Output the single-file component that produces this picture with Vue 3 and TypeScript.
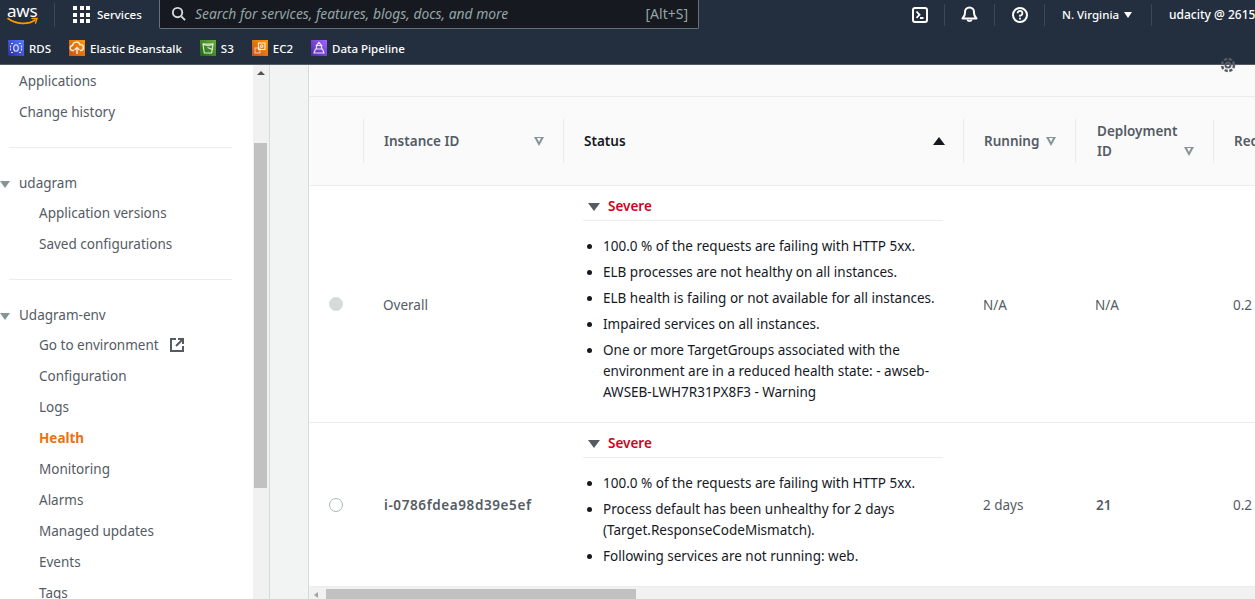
<script setup lang="ts">
interface NavItem {
  label: string
  active?: boolean
  external?: boolean
}

interface Row {
  id: string
  bold: boolean
  filled: boolean
  running: string
  deployment: string
  causes: string[]
}

const shortcuts = [
  { label: 'RDS', kind: 'rds' },
  { label: 'Elastic Beanstalk', kind: 'eb' },
  { label: 'S3', kind: 's3' },
  { label: 'EC2', kind: 'ec2' },
  { label: 'Data Pipeline', kind: 'dp' }
]

const appItems: NavItem[] = [{ label: 'Application versions' }, { label: 'Saved configurations' }]

const envItems: NavItem[] = [
  { label: 'Go to environment', external: true },
  { label: 'Configuration' },
  { label: 'Logs' },
  { label: 'Health', active: true },
  { label: 'Monitoring' },
  { label: 'Alarms' },
  { label: 'Managed updates' },
  { label: 'Events' },
  { label: 'Tags' }
]

const rows: Row[] = [
  {
    id: 'Overall',
    bold: false,
    filled: true,
    running: 'N/A',
    deployment: 'N/A',
    causes: [
      '100.0 % of the requests are failing with HTTP 5xx.',
      'ELB processes are not healthy on all instances.',
      'ELB health is failing or not available for all instances.',
      'Impaired services on all instances.',
      'One or more TargetGroups associated with the environment are in a reduced health state: - awseb-AWSEB-LWH7R31PX8F3 - Warning'
    ]
  },
  {
    id: 'i-0786fdea98d39e5ef',
    bold: true,
    filled: false,
    running: '2 days',
    deployment: '21',
    causes: [
      '100.0 % of the requests are failing with HTTP 5xx.',
      'Process default has been unhealthy for 2 days (Target.ResponseCodeMismatch).',
      'Following services are not running: web.'
    ]
  }
]
</script>

<template>
  <div class="page">
    <header class="top">
      <div class="top-main">
        <div class="logo">
          <span class="logo-text">aws</span>
          <svg class="smile" viewBox="0 0 32 9" fill="none">
            <path d="M1 1.5C9 7.5 21 8 28 3" stroke="#ff9900" stroke-width="1.6" stroke-linecap="round" />
            <path d="M25 1.5h5l-1.5 4.5" stroke="#ff9900" stroke-width="1.4" stroke-linecap="round" />
          </svg>
        </div>
        <div class="services">
          <span class="grid-icon"><i v-for="n in 9" :key="n"></i></span>
          <span>Services</span>
        </div>
        <div class="search">
          <svg class="search-icon" viewBox="0 0 16 16" fill="none">
            <circle cx="7" cy="7" r="5" stroke="#d5dbdb" stroke-width="2" />
            <path d="M11 11l4 4" stroke="#d5dbdb" stroke-width="2" />
          </svg>
          <span class="search-text">Search for services, features, blogs, docs, and more</span>
          <span class="search-key">[Alt+S]</span>
        </div>
        <div class="top-actions">
          <div class="action">
            <svg width="16" height="16" viewBox="0 0 16 16" fill="none">
              <rect x="1" y="1" width="14" height="14" rx="2" stroke="#fff" stroke-width="2" />
              <path d="M4.5 4.5L7.5 7.8l-3 3M8 11h3.5" stroke="#fff" stroke-width="1.8" />
            </svg>
          </div>
          <div class="action">
            <svg width="17" height="17" viewBox="0 0 17 17" fill="none">
              <path d="M1.5 12.5h14c-1.5-1.5-2.5-3-2.5-5.5V6a4.500 4.500 0 0 0-9 0v1c0 2.500-1 4-2.500 5.500z" stroke="#fff" stroke-width="2" stroke-linejoin="round" />
              <path d="M6.3 13.5a2.300 2.300 0 0 0 4.400 0" stroke="#fff" stroke-width="1.8" />
            </svg>
          </div>
          <div class="action">
            <svg width="16" height="16" viewBox="0 0 16 16" fill="none">
              <circle cx="8" cy="8" r="7" stroke="#fff" stroke-width="2" />
              <path d="M5.6 6.3A2.400 2.400 0 1 1 8 8.600v1.200" stroke="#fff" stroke-width="1.8" />
              <path d="M8 10.7v1.8" stroke="#fff" stroke-width="1.8" />
            </svg>
          </div>
          <div class="region">N. Virginia <span class="caret"></span></div>
          <div class="account">udacity @ 2615</div>
        </div>
      </div>
      <nav class="shortcuts">
        <div v-for="s in shortcuts" :key="s.label" class="shortcut">
          <span class="svc" :class="s.kind">
            <svg viewBox="0 0 16 16" fill="none" stroke="#fff" stroke-width="1.1" stroke-opacity="0.85">
              <template v-if="s.kind === 'rds'">
                <ellipse cx="8" cy="8" rx="2.3" ry="3.3" />
                <path d="M2.5 5.5v5M13.5 5.5v5M5 3.5H2.5M11 3.5h2.500M5 12.500H2.500M11 12.500h2.500" stroke-dasharray="2 1" />
              </template>
              <template v-else-if="s.kind === 'eb'">
                <path d="M5 10.500H4a2.500 2.500 0 0 1-.4-5 3.800 3.800 0 0 1 7.400-.8 2.900 2.900 0 0 1 1 5.800h-1" stroke-width="1.4" />
                <path d="M8 14V7.500M5.500 10L8 7.500l2.500 2.500" stroke-width="1.4" />
              </template>
              <template v-else-if="s.kind === 's3'">
                <path d="M3 4h10l-1.3 9H4.300z" />
                <path d="M3 4c2 1.800 8 1.800 10 0M7.500 7.500l5 2" />
              </template>
              <template v-else-if="s.kind === 'ec2'">
                <rect x="6.5" y="3" width="6.5" height="6.5" />
                <rect x="3" y="8" width="5" height="5" stroke-opacity="0.6" />
                <circle cx="9.7" cy="6.2" r="1.2" />
              </template>
              <template v-else>
                <path d="M8 2.500l2.500 3h-5zM5.500 6v3M10.500 6v3M3 13l1.500-4h7L13 13z" stroke-width="1.2" />
              </template>
            </svg>
          </span>
          <span>{{ s.label }}</span>
        </div>
      </nav>
    </header>

    <div class="body">
      <aside class="side">
        <div class="side-scroll">
          <a class="nav-top">Applications</a>
          <a class="nav-top">Change history</a>
          <hr class="divider" />
          <div class="group"><span class="tri"></span>udagram</div>
          <a v-for="item in appItems" :key="item.label" class="nav-sub">{{ item.label }}</a>
          <hr class="divider" />
          <div class="group"><span class="tri"></span>Udagram-env</div>
          <a v-for="item in envItems" :key="item.label" class="nav-sub" :class="{ active: item.active }">
            {{ item.label }}
            <svg v-if="item.external" class="ext" viewBox="0 0 14 14" fill="none">
              <path d="M6 1H1v12h12V8" stroke="#545b64" stroke-width="2" />
              <path d="M8 1h5v5M13 1L6 8" stroke="#545b64" stroke-width="2" />
            </svg>
          </a>
        </div>
        <div class="side-bar">
          <span class="arrow-up"></span>
          <span class="thumb-v"></span>
        </div>
      </aside>

      <main class="gutter">
        <section class="panel">
          <div class="panel-top">
            <svg class="gear" viewBox="0 0 16 16" fill="none">
              <circle cx="8" cy="8" r="2.5" stroke="#545b64" stroke-width="2" />
              <circle cx="8" cy="8" r="6" stroke="#545b64" stroke-width="2.5" stroke-dasharray="3.2 1.5" />
            </svg>
          </div>
          <div class="table-wrap">
            <table class="health">
              <colgroup>
                <col class="c-radio" />
                <col class="c-id" />
                <col class="c-status" />
                <col class="c-run" />
                <col class="c-dep" />
                <col class="c-req" />
              </colgroup>
              <thead>
                <tr>
                  <th></th>
                  <th>
                    <div class="th-in">Instance ID<span class="sort"></span></div>
                  </th>
                  <th>
                    <div class="th-in sorted">Status<span class="sort-up"></span></div>
                  </th>
                  <th>
                    <div class="th-in">Running<span class="sort"></span></div>
                  </th>
                  <th>
                    <div class="th-in dep"><span>Deployment<br />ID</span><span class="sort low"></span></div>
                  </th>
                  <th>
                    <div class="th-in">Requests</div>
                  </th>
                </tr>
              </thead>
              <tbody>
                <tr v-for="row in rows" :key="row.id">
                  <td class="radio-cell">
                    <span class="radio" :class="{ filled: row.filled }"></span>
                  </td>
                  <td :class="{ strong: row.bold, 'strong-id': row.bold }">{{ row.id }}</td>
                  <td class="status-cell">
                    <div class="severe"><span class="tri dark"></span>Severe</div>
                    <ul>
                      <li v-for="cause in row.causes" :key="cause">{{ cause }}</li>
                    </ul>
                  </td>
                  <td>{{ row.running }}</td>
                  <td :class="{ strong: row.bold }">{{ row.deployment }}</td>
                  <td>0.2</td>
                </tr>
              </tbody>
            </table>
          </div>
          <div class="h-bar">
            <span class="arrow-left"></span>
            <span class="thumb-h"></span>
          </div>
        </section>
      </main>
    </div>
  </div>
</template>

<style>
html,
body {
  margin: 0;
  overflow: hidden;
}
</style>

<style scoped>
.page {
  width: 1255px;
  height: 599px;
  display: flex;
  flex-direction: column;
  overflow: hidden;
  font-family: 'Noto Sans', 'Open Sans', sans-serif;
  font-size: 13.5px;
  color: #16191f;
  background: #fff;
}

.top {
  height: 65px;
  flex: none;
  background: #232f3e;
  border-bottom: 1px solid #545b64;
  box-sizing: border-box;
  color: #fff;
}

.top-main {
  height: 29px;
  display: flex;
  align-items: center;
  background: #232f3e;
}

.logo {
  width: 55px;
  flex: none;
  box-sizing: border-box;
  padding-left: 7px;
  height: 24px;
  border-right: 1px solid #414750;
  display: flex;
  flex-direction: column;
  position: relative;
}

.logo-text {
  font-size: 17px;
  line-height: 15px;
  letter-spacing: -0.2px;
  color: #fff;
}

.smile {
  width: 32px;
  height: 9px;
  margin-top: -1px;
}

.services {
  display: flex;
  align-items: center;
  gap: 7px;
  width: 104px;
  flex: none;
  box-sizing: border-box;
  padding-left: 18px;
  font-size: 11.5px;
  font-weight: 500;
}

.grid-icon {
  display: grid;
  grid-template-columns: repeat(3, 4px);
  gap: 2.5px;
}

.grid-icon i {
  width: 4px;
  height: 4px;
  background: #fff;
}

.search {
  width: 540px;
  height: 29px;
  flex: none;
  box-sizing: border-box;
  background: #16191f;
  border: 1px solid #687078;
  border-top: none;
  border-radius: 0 0 2px 2px;
  display: flex;
  align-items: center;
  padding: 0 10px 2px 11px;
}

.search-icon {
  width: 15px;
  height: 15px;
  flex: none;
}

.search-text {
  margin-left: 9px;
  font-style: italic;
  color: #95a5a6;
  font-size: 13.85px;
  flex: 1;
  white-space: nowrap;
}

.search-key {
  color: #95a5a6;
  font-size: 14px;
}

.top-actions {
  display: flex;
  align-items: center;
  margin-left: 196px;
  flex: none;
  height: 24px;
  white-space: nowrap;
  font-size: 11.5px;
  font-weight: 500;
}

.action {
  width: 50px;
  height: 22px;
  box-sizing: border-box;
  border-right: 1px solid #414750;
  display: flex;
  align-items: center;
  justify-content: center;
}

.region {
  width: 107px;
  height: 22px;
  line-height: 22px;
  box-sizing: border-box;
  padding-left: 17px;
  border-right: 1px solid #414750;
}

.caret {
  display: inline-block;
  width: 0;
  height: 0;
  margin-left: 2px;
  border-left: 4.5px solid transparent;
  border-right: 4.5px solid transparent;
  border-top: 6px solid #fff;
  vertical-align: 1px;
}

.account {
  padding-left: 17px;
  font-size: 12px;
}

.shortcuts {
  height: 35px;
  display: flex;
  align-items: center;
  padding: 3px 0 0 8px;
  box-sizing: border-box;
  gap: 18px;
  font-size: 11.5px;
  font-weight: 500;
}

.shortcut {
  display: flex;
  align-items: center;
  gap: 5px;
}

.svc {
  width: 16px;
  height: 16px;
  display: block;
}

.svc svg {
  width: 16px;
  height: 16px;
  display: block;
}

.rds {
  background: linear-gradient(45deg, #2e27ad, #527fff);
}

.eb,
.ec2 {
  background: linear-gradient(45deg, #c8511b, #ff9900);
}

.s3 {
  background: linear-gradient(45deg, #1b660f, #6cae3e);
}

.dp {
  background: linear-gradient(45deg, #4d27a8, #a166ff);
}

.body {
  flex: 1;
  display: flex;
  min-height: 0;
}

.side {
  width: 270px;
  flex: none;
  display: flex;
  border-right: 1px solid #d5dbdb;
  box-sizing: border-box;
}

.side-scroll {
  width: 253px;
  flex: none;
  background: #fff;
  box-sizing: border-box;
  padding-top: 1px;
  overflow: hidden;
  color: #545b64;
  font-size: 13.5px;
}

.nav-top,
.nav-sub {
  display: block;
  height: 31px;
  line-height: 31px;
  white-space: nowrap;
}

.group {
  display: block;
  height: 30px;
  line-height: 31px;
  white-space: nowrap;
}

.nav-top,
.group {
  padding-left: 19px;
  position: relative;
}

.nav-sub {
  padding-left: 39px;
}

.nav-sub.active {
  color: #ec7211;
  font-weight: 700;
}

.divider {
  margin: 19px 21px 20px 9px;
  border: none;
  border-top: 1px solid #eaeded;
}

.group .tri {
  position: absolute;
  left: 0;
  top: 13px;
}

.tri {
  display: inline-block;
  width: 0;
  height: 0;
  border-left: 5px solid transparent;
  border-right: 5px solid transparent;
  border-top: 7px solid #879596;
}

.tri.dark {
  border-left-width: 6px;
  border-right-width: 6px;
  border-top: 8px solid #545b64;
  margin-right: 8px;
  vertical-align: 0;
}

.ext {
  width: 14px;
  height: 14px;
  margin-left: 8px;
  vertical-align: -2px;
}

.side-bar {
  width: 16px;
  flex: none;
  background: #f1f1f1;
  position: relative;
}

.arrow-up {
  position: absolute;
  left: 4px;
  top: 6px;
  width: 0;
  height: 0;
  border-left: 4px solid transparent;
  border-right: 4px solid transparent;
  border-bottom: 4px solid #505050;
}

.thumb-v {
  position: absolute;
  left: 1px;
  top: 78px;
  width: 13px;
  height: 345px;
  background: #c1c1c1;
}

.gutter {
  flex: 1;
  min-width: 0;
  background: #f2f3f3;
  padding-left: 38px;
  display: flex;
}

.panel {
  flex: 1;
  min-width: 0;
  background: #fff;
  border-left: 1px solid #d5dbdb;
  display: flex;
  flex-direction: column;
}

.panel-top {
  height: 31px;
  flex: none;
  background: #fafafa;
  border-bottom: 1px solid #eaeded;
  position: relative;
}

.gear {
  position: absolute;
  right: 19px;
  top: -8px;
  width: 16px;
  height: 16px;
}

.table-wrap {
  flex: 1;
  overflow: hidden;
  min-height: 0;
}

.health {
  table-layout: fixed;
  border-collapse: collapse;
  width: 999px;
}

.c-radio {
  width: 54px;
}

.c-id {
  width: 200px;
}

.c-status {
  width: 400px;
}

.c-run {
  width: 112px;
}

.c-dep {
  width: 138px;
}

.c-req {
  width: 95px;
}

th {
  height: 88px;
  background: #fafafa;
  border-bottom: 1px solid #eaeded;
  padding: 0;
  text-align: left;
  color: #545b64;
  font-weight: 600;
  font-size: 13.5px;
  line-height: 20px;
}

.th-in {
  height: 44px;
  border-left: 1px solid #eaeded;
  display: flex;
  align-items: center;
  justify-content: space-between;
  padding: 0 19px 0 20px;
  box-sizing: border-box;
  white-space: nowrap;
  overflow: hidden;
}

th:first-child .th-in {
  border: none;
}

.th-in.sorted {
  color: #16191f;
  padding-right: 18px;
}

.th-in.dep {
  padding-left: 21px;
}

.sort {
  width: 0;
  height: 0;
  border-left: 5.5px solid transparent;
  border-right: 5.5px solid transparent;
  border-top: 9px solid #879596;
  position: relative;
}

.sort::after {
  content: '';
  position: absolute;
  left: -2.5px;
  top: -7.5px;
  border-left: 2.5px solid transparent;
  border-right: 2.5px solid transparent;
  border-top: 4px solid #fafafa;
}

.sort.low {
  margin-top: 20px;
}

.sort-up {
  width: 0;
  height: 0;
  border-left: 6px solid transparent;
  border-right: 6px solid transparent;
  border-bottom: 8px solid #16191f;
}

td {
  padding: 2px 0 0 20px;
  color: #545b64;
  font-size: 13.5px;
  border-bottom: 1px solid #eaeded;
  vertical-align: middle;
  line-height: 21px;
  white-space: nowrap;
  overflow: hidden;
}

td.strong {
  font-weight: 600;
  padding-left: 21px;
}

td.strong-id {
  letter-spacing: 0.6px;
}

.radio-cell {
  padding: 0 0 0 20px;
}

.radio {
  display: block;
  width: 12px;
  height: 12px;
  border: 1px solid #aab7b8;
  border-radius: 50%;
}

.radio.filled {
  background: #d5dbdb;
  border-color: #d5dbdb;
}

.status-cell {
  white-space: normal;
  padding: 10px 20px 14px 20px;
  color: #16191f;
}

.severe {
  color: #d0021b;
  font-weight: 600;
  height: 24px;
  line-height: 21px;
  border-bottom: 1px solid #eaeded;
  padding-left: 5px;
}

ul {
  list-style: disc;
  margin: 0;
  padding: 15px 0 0 20px;
  color: #16191f;
}

li {
  margin-bottom: 5px;
}

.h-bar {
  flex: none;
  height: 12px;
  background: #f1f1f1;
  position: relative;
}

.arrow-left {
  position: absolute;
  left: 5px;
  top: 5px;
  width: 0;
  height: 0;
  border-top: 3.5px solid transparent;
  border-bottom: 3.5px solid transparent;
  border-right: 4px solid #a3a3a3;
}

.thumb-h {
  position: absolute;
  left: 17px;
  top: 2px;
  width: 310px;
  height: 10px;
  background: #c1c1c1;
}
</style>
